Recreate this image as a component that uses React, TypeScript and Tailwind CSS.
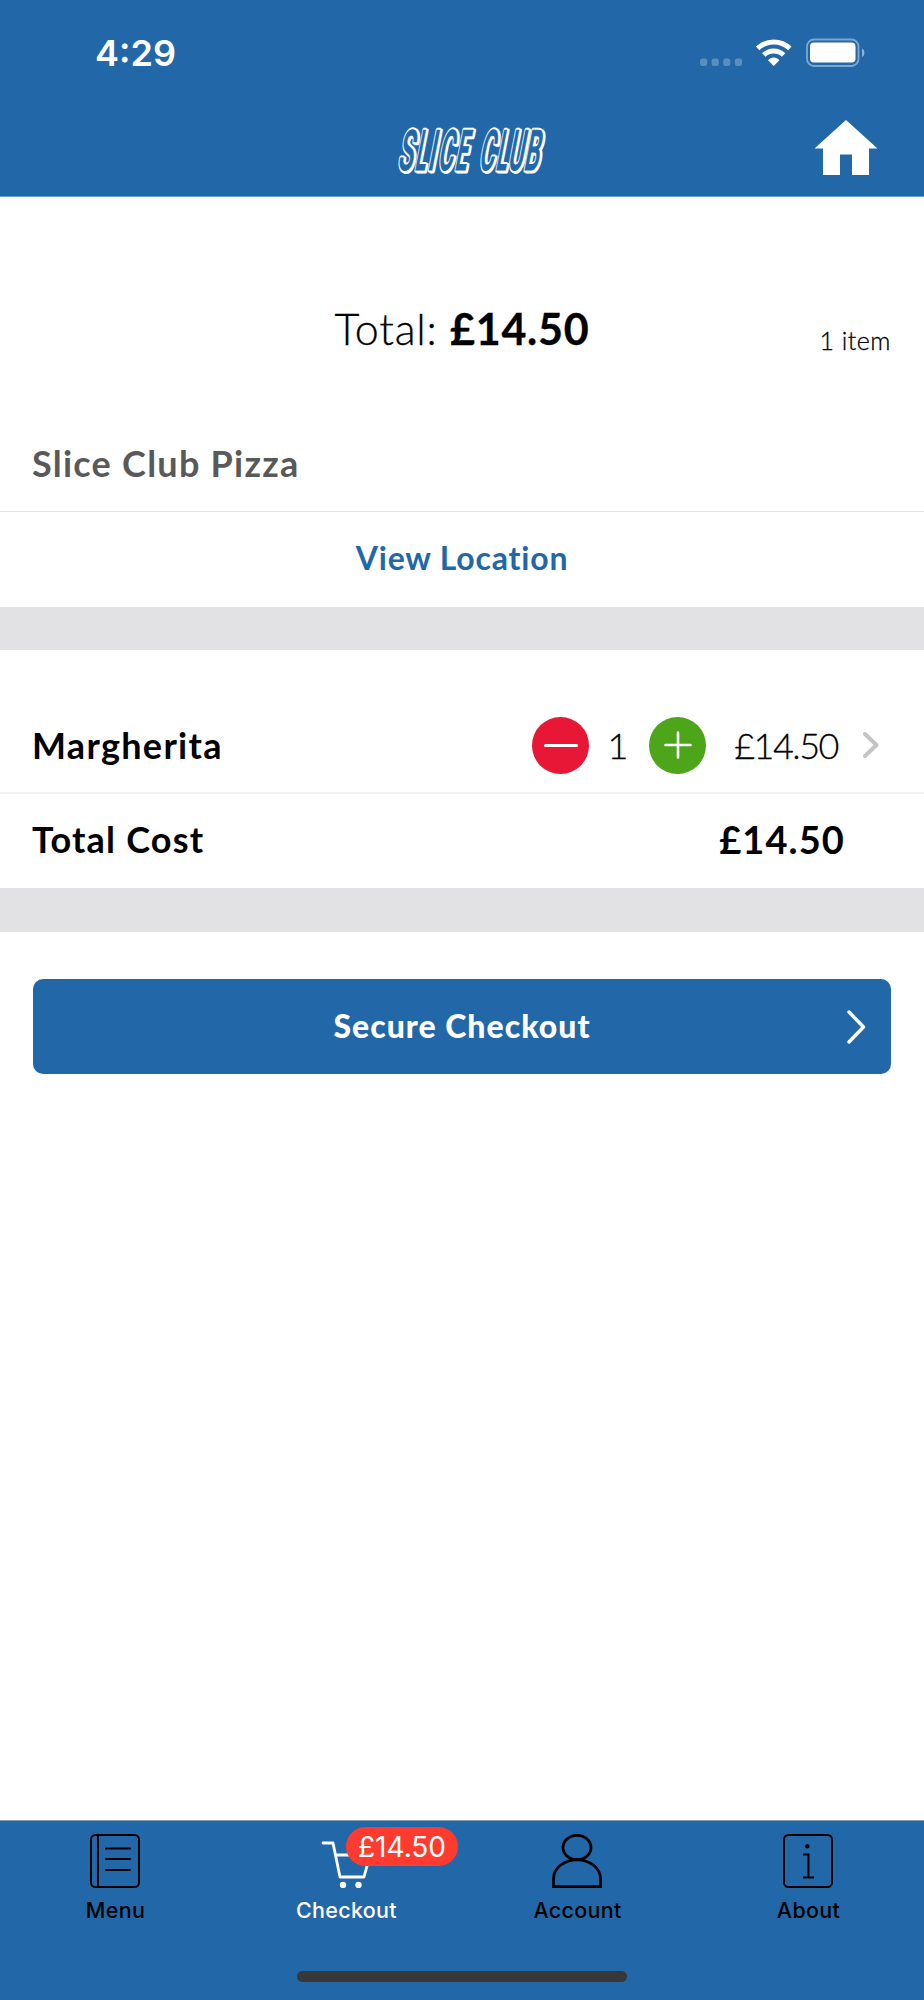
import type { ReactNode } from 'react'

function StatusBar() {
  return (
    <div className="flex h-[106px] items-center justify-between pl-[95px] pr-[59px]">
      <span className="font-['Inter'] text-[36px] font-semibold leading-none">4:29</span>
      <svg width="166" height="30" viewBox="0 0 166 30" fill="none">
        {[0, 11.6, 23.2, 34.8].map((x) => (
          <rect key={x} x={x + 1} y="20.5" width="7.2" height="7.6" rx="2.4" fill="#fff" fillOpacity="0.25" />
        ))}
        <g stroke="#fff" strokeWidth="5">
          <path d="M58.6 10.4a23.2 23.2 0 0 1 32.2 0" />
          <path d="M64.8 17a14.2 14.2 0 0 1 19.8 0" />
        </g>
        <path d="M74.7 28 69 22.2c3-3.6 8.4-3.6 11.4 0z" fill="#fff" />
        <rect x="108" y="1.5" width="51.5" height="26.5" rx="7" stroke="#fff" strokeOpacity="0.42" strokeWidth="1.8" />
        <rect x="111" y="4.5" width="45.5" height="20" rx="4" fill="#fff" />
        <path d="M163 10.5c3.2 1.4 3.2 7.2 0 8.6z" fill="#fff" fillOpacity="0.5" />
      </svg>
    </div>
  )
}

// letter, x offset and width of every glyph in the wordmark
const LOGO_LETTERS: [string, number, number][] = [
  ['S', 3, 15],
  ['L', 20, 11],
  ['I', 33, 7],
  ['C', 43, 15],
  ['E', 60, 12],
  ['C', 84, 15],
  ['L', 101, 11],
  ['U', 113, 15],
  ['B', 129, 15],
]

function LogoText({ className, dx = 0, dy = 0 }: { className: string; dx?: number; dy?: number }) {
  return (
    <g transform={`translate(${dx} ${dy})`} className={className}>
      {LOGO_LETTERS.map(([letter, x, width]) => (
        <text key={x} x={x} y="0" textLength={width} lengthAdjust="spacingAndGlyphs">
          {letter}
        </text>
      ))}
    </g>
  )
}

function Logo() {
  return (
    <svg width="150" height="52" viewBox="0 0 150 52" className="overflow-visible">
      <g
        transform="translate(-1 48) skewX(-11)"
        fontFamily="Roboto, sans-serif"
        fontWeight="500"
        fontSize="56"
        strokeLinejoin="round"
      >
        <LogoText className="fill-white stroke-white stroke-[5px]" dx={2} dy={1} />
        <LogoText className="fill-white stroke-white stroke-[5px]" />
        <LogoText className="fill-[#2268a8] stroke-[#2268a8] stroke-[1px]" />
      </g>
    </svg>
  )
}

function HomeIcon() {
  return (
    <svg width="64" height="56" viewBox="0 0 64 56" fill="#fff">
      <path d="M32 0 63.5 28.5H55V55H38V34.5H26V55H9V28.5H.5z" />
    </svg>
  )
}

function Row({ children, className = '' }: { children: ReactNode; className?: string }) {
  return <div className={`flex items-center ${className}`}>{children}</div>
}

function MenuIcon() {
  return (
    <svg width="50" height="54" viewBox="0 0 50 54" fill="none" stroke="#000" strokeWidth="2">
      <rect x="1" y="1" width="48" height="52" rx="4.5" />
      <path d="M8 1v52" />
      <path d="M16 14.5h24M16 25h24M16 36h24" strokeLinecap="round" />
    </svg>
  )
}

function CartIcon() {
  return (
    <svg width="50" height="54" viewBox="0 0 50 54" fill="none" stroke="#fff" strokeWidth="2.8">
      <path d="M2 9h10l7 34h24l6-22H14.5" strokeLinecap="round" strokeLinejoin="round" />
      <circle cx="22" cy="51" r="3.2" fill="#fff" stroke="none" />
      <circle cx="37.5" cy="51" r="3.2" fill="#fff" stroke="none" />
    </svg>
  )
}

function AccountIcon() {
  return (
    <svg width="50" height="54" viewBox="0 0 50 54" fill="none" stroke="#000" strokeWidth="2.8">
      <ellipse cx="25" cy="13.5" rx="14" ry="12.2" />
      <path d="M1.5 52.6V45C1.5 34 12 25.8 25 25.8S48.5 34 48.5 45v7.6z" />
    </svg>
  )
}

function AboutIcon() {
  return (
    <svg width="50" height="54" viewBox="0 0 50 54" fill="none" stroke="#000" strokeWidth="2">
      <rect x="1" y="1" width="48" height="52" rx="4.5" />
      <circle cx="24.3" cy="12.2" r="2.2" fill="#000" stroke="none" />
      <path d="M20 20.5h5.500v23M20 43.5h11" />
    </svg>
  )
}

const TABS = [
  { label: 'Menu', icon: <MenuIcon /> },
  { label: 'Checkout', icon: <CartIcon />, badge: '£14.50', active: true },
  { label: 'Account', icon: <AccountIcon /> },
  { label: 'About', icon: <AboutIcon /> },
]

export default function App() {
  return (
    <div className="flex h-[2000px] w-[924px] flex-col bg-white font-['Lato',sans-serif] text-black">
      {/* Header */}
      <header className="h-[197px] shrink-0 border-b border-[#6c9bc6] bg-[#2268a8] text-white">
        <StatusBar />
        <div className="grid grid-cols-[1fr_150px_1fr] items-center pl-[23px] pr-[46px] pt-[14px]">
          <span />
          <span className="ml-[19px]">
            <Logo />
          </span>
          <span className="justify-self-end">
            <HomeIcon />
          </span>
        </div>
      </header>

      {/* Order total */}
      <div className="grid h-[223px] grid-cols-[1fr_auto_1fr] pl-[33px] pr-[33px] pt-[106px]">
        <span />
        <p className="whitespace-nowrap text-[43px] font-light leading-[52px] tracking-[0.75px] [-webkit-text-stroke:0.3px]">
          Total: <b className="font-bold">£14.50</b>
        </p>
        <span className="justify-self-end pt-[21px] text-[25px] font-light leading-[32px] tracking-[0.5px] [-webkit-text-stroke:0.3px]">
          1 item
        </span>
      </div>

      <Row className="h-[92px] border-b border-[#e6e6e6] px-[32px] pb-[6px]">
        <h2 className="text-[36px] font-bold leading-none tracking-[1.25px] text-[#595959]">Slice Club Pizza</h2>
      </Row>
      <Row className="h-[95px] justify-center pb-[3px]">
        <span className="text-[32px] font-bold leading-none tracking-[0.8px] text-[#2268a8]">View Location</span>
      </Row>
      <div className="h-[43px] bg-[#e2e2e4]" />

      {/* Basket */}
      <Row className="h-[144px] border-b-2 border-[#f2f2f2] pl-[32px] pr-[43px] pt-[48px]">
        <span className="text-[36px] font-bold leading-none tracking-[1.3px]">Margherita</span>
        <span className="flex-1" />
        <button className="flex size-[57px] items-center justify-center rounded-full bg-[#e81735]">
          <span className="h-[3px] w-[34px] rounded-full bg-white" />
        </button>
        <span className="w-[60px] pr-[2px] text-center text-[36px] font-light leading-none [-webkit-text-stroke:0.3px]">1</span>
        <button className="flex size-[57px] items-center justify-center rounded-full bg-[#4da61a]">
          <svg width="28" height="28" viewBox="0 0 28 28" stroke="#fff" strokeWidth="2.6" strokeLinecap="round">
            <path d="M14 1.5v25M1.5 14h25" />
          </svg>
        </button>
        <span className="w-[132px] text-right text-[36px] font-light leading-none tracking-[-1.5px] [-webkit-text-stroke:0.3px]">
          £14.50
        </span>
        <svg className="ml-[23px]" width="20" height="30" viewBox="0 0 20 30" fill="none" stroke="#c4c4c6" strokeWidth="4">
          <path d="M4 4l11.5 11L4 26" strokeLinecap="round" strokeLinejoin="round" />
        </svg>
      </Row>
      <Row className="h-[94px] justify-between pb-[5px] pl-[32px] pr-[79px]">
        <span className="text-[36px] font-bold leading-none tracking-[1.2px]">Total Cost</span>
        <span className="text-[38px] font-bold leading-none tracking-[1.1px]">£14.50</span>
      </Row>
      <div className="h-[44px] bg-[#e2e2e4]" />

      <button className="relative mx-[33px] mt-[47px] flex h-[95px] items-center justify-center rounded-[10px] bg-[#2268a8] pb-[1px] text-white">
        <span className="text-[32px] font-black leading-none tracking-[1px]">Secure Checkout</span>
        <svg
          className="absolute right-[24px] top-[29px]"
          width="22"
          height="38"
          viewBox="0 0 22 38"
          fill="none"
          stroke="#fff"
          strokeWidth="3.4"
        >
          <path d="M4 4l14.5 15L4 34" strokeLinecap="round" strokeLinejoin="round" />
        </svg>
      </button>

      {/* Tab bar */}
      <nav className="mt-auto flex h-[180px] flex-col items-center border-t border-[#7f99ad] bg-[#2268a8]">
        <div className="grid w-full grid-cols-4 pt-[13px] font-['Inter']">
          {TABS.map((tab) => (
            <div key={tab.label} className={`relative flex flex-col items-center ${tab.active ? 'text-white' : 'text-black'}`}>
              <span className="mr-[2px]">{tab.icon}</span>
              <span className="mt-[9px] text-[21.5px] font-medium leading-[26px] tracking-[0.3px]">{tab.label}</span>
              {tab.badge && (
                <span className="absolute left-[115px] top-[-7px] flex h-[39px] w-[112px] items-center justify-center rounded-full bg-[#ff3b30] text-[28px] leading-none text-white">
                  {tab.badge}
                </span>
              )}
            </div>
          ))}
        </div>
        <div className="mt-[48px] h-[11px] w-[330px] rounded-full bg-[#383838]" />
      </nav>
    </div>
  )
}
